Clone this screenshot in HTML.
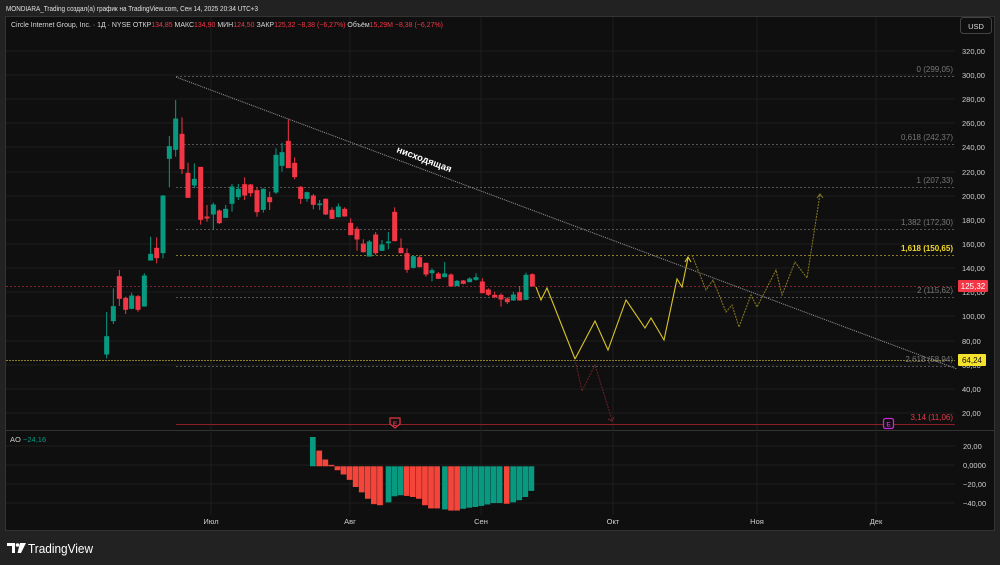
<!DOCTYPE html>
<html><head><meta charset="utf-8"><style>
html,body{margin:0;padding:0;background:#222;width:1000px;height:565px;overflow:hidden}
svg{display:block;font-family:"Liberation Sans","DejaVu Sans",sans-serif}
</style></head><body>
<svg width="1000" height="565" viewBox="0 0 1000 565" xmlns="http://www.w3.org/2000/svg">
<rect width="1000" height="565" fill="#222"/>
<text x="6" y="11" font-size="7.5" fill="#e0e0e0" textLength="252" lengthAdjust="spacingAndGlyphs">MONDIARA_Trading создал(а) график на TradingView.com, Сен 14, 2025 20:34 UTC+3</text>
<rect x="5.5" y="16.5" width="989" height="514" fill="#0f0f0f" stroke="#333"/>
<line x1="5" y1="430.5" x2="995" y2="430.5" stroke="#333"/>
<!-- grid -->
<g stroke="#1c1c1c" stroke-width="1">
<line x1="211" y1="17" x2="211" y2="515"/><line x1="350" y1="17" x2="350" y2="515"/><line x1="481" y1="17" x2="481" y2="515"/><line x1="613" y1="17" x2="613" y2="515"/><line x1="757" y1="17" x2="757" y2="515"/><line x1="876" y1="17" x2="876" y2="515"/>
<line x1="6" y1="51" x2="955" y2="51"/><line x1="6" y1="75" x2="955" y2="75"/><line x1="6" y1="99" x2="955" y2="99"/><line x1="6" y1="123" x2="955" y2="123"/><line x1="6" y1="147" x2="955" y2="147"/><line x1="6" y1="172" x2="955" y2="172"/><line x1="6" y1="196" x2="955" y2="196"/><line x1="6" y1="220" x2="955" y2="220"/><line x1="6" y1="244" x2="955" y2="244"/><line x1="6" y1="268" x2="955" y2="268"/><line x1="6" y1="292" x2="955" y2="292"/><line x1="6" y1="316" x2="955" y2="316"/><line x1="6" y1="341" x2="955" y2="341"/><line x1="6" y1="365" x2="955" y2="365"/><line x1="6" y1="389" x2="955" y2="389"/><line x1="6" y1="413" x2="955" y2="413"/>
<line x1="6" y1="446" x2="955" y2="446"/><line x1="6" y1="465" x2="955" y2="465"/><line x1="6" y1="484" x2="955" y2="484"/><line x1="6" y1="503" x2="955" y2="503"/>
</g>
<!-- fib lines -->
<g stroke="#555" stroke-dasharray="2,2" stroke-width="1">
<line x1="176" y1="76.5" x2="955" y2="76.5"/><line x1="176" y1="144.5" x2="955" y2="144.5"/><line x1="176" y1="187.5" x2="955" y2="187.5"/><line x1="176" y1="229.5" x2="955" y2="229.5"/><line x1="176" y1="297.5" x2="955" y2="297.5"/><line x1="176" y1="366.5" x2="955" y2="366.5"/>
</g>
<line x1="176" y1="255.5" x2="955" y2="255.5" stroke="#8a7d2a" stroke-dasharray="2,2"/>
<line x1="6" y1="286.5" x2="955" y2="286.5" stroke="#7a2530" stroke-dasharray="2,2"/>
<line x1="6" y1="360.5" x2="955" y2="360.5" stroke="#8a7d2a" stroke-dasharray="2,1"/>
<line x1="176" y1="424.5" x2="955" y2="424.5" stroke="#8a1f2a"/>
<g font-size="8" fill="#777" text-anchor="end">
<text x="953" y="72">0 (299,05)</text><text x="953" y="140">0,618 (242,37)</text><text x="953" y="183">1 (207,33)</text><text x="953" y="225">1,382 (172,30)</text><text x="953" y="251" fill="#f2d82a" font-weight="bold">1,618 (150,65)</text><text x="953" y="293">2 (115,62)</text><text x="953" y="362">2,618 (58,94)</text><text x="953" y="420" fill="#e8394a">3,14 (11,06)</text>
</g>
<!-- trend line -->
<line x1="176" y1="77" x2="957" y2="369" stroke="#9a9a9a" stroke-width="1" stroke-dasharray="1,1"/>
<text x="0" y="0" font-size="9.5" font-weight="bold" fill="#fff" transform="translate(396,152) rotate(20.5)">нисходящая</text>
<!-- candles -->
<g transform="translate(80,100) scale(0.33333)">
<g fill="#089981" stroke="#089981" stroke-width="3">
<line x1="80" y1="636" x2="80" y2="775"/><rect x="74" y="710" width="12" height="52"/>
<line x1="100" y1="565" x2="100" y2="672"/><rect x="94" y="620" width="12" height="42"/>
<line x1="155" y1="578" x2="155" y2="628"/><rect x="149" y="588" width="12" height="37"/>
<line x1="193" y1="520" x2="193" y2="620"/><rect x="187" y="528" width="12" height="90"/>
<line x1="212" y1="410" x2="212" y2="482"/><rect x="206" y="463" width="12" height="17"/>
<line x1="249" y1="285" x2="249" y2="475"/><rect x="243" y="288" width="12" height="170"/>
<line x1="268" y1="108" x2="268" y2="262"/><rect x="262" y="140" width="12" height="35"/>
<line x1="287" y1="0" x2="287" y2="170"/><rect x="281" y="57" width="12" height="91"/>
<line x1="343" y1="190" x2="343" y2="265"/><rect x="337" y="238" width="12" height="17"/>
<line x1="400" y1="308" x2="400" y2="390"/><rect x="394" y="315" width="12" height="27"/>
<line x1="437" y1="315" x2="437" y2="352"/><rect x="431" y="328" width="12" height="24"/>
<line x1="456" y1="252" x2="456" y2="335"/><rect x="450" y="261" width="12" height="49"/>
<line x1="475" y1="252" x2="475" y2="300"/><rect x="469" y="268" width="12" height="22"/>
<line x1="550" y1="265" x2="550" y2="338"/><rect x="544" y="268" width="12" height="60"/>
<line x1="588" y1="145" x2="588" y2="282"/><rect x="582" y="166" width="12" height="110"/>
<line x1="606" y1="128" x2="606" y2="215"/><rect x="600" y="158" width="12" height="38"/>
<line x1="681" y1="275" x2="681" y2="305"/><rect x="675" y="278" width="12" height="17"/>
<line x1="719" y1="300" x2="719" y2="330"/><rect x="713" y="312" width="12" height="2"/>
<line x1="775" y1="310" x2="775" y2="352"/><rect x="769" y="321" width="12" height="29"/>
<line x1="868" y1="420" x2="868" y2="470"/><rect x="862" y="426" width="12" height="42"/>
<line x1="906" y1="420" x2="906" y2="453"/><rect x="900" y="435" width="12" height="16"/>
<line x1="925" y1="396" x2="925" y2="448"/><rect x="919" y="426" width="12" height="2"/>
<line x1="1000" y1="465" x2="1000" y2="506"/><rect x="994" y="470" width="12" height="32"/>
<line x1="1056" y1="505" x2="1056" y2="544"/><rect x="1050" y="512" width="12" height="6"/>
<line x1="1094" y1="486" x2="1094" y2="532"/><rect x="1088" y="522" width="12" height="8"/>
<line x1="1131" y1="540" x2="1131" y2="558"/><rect x="1125" y="544" width="12" height="13"/>
<line x1="1169" y1="532" x2="1169" y2="547"/><rect x="1163" y="537" width="12" height="8"/>
<line x1="1188" y1="520" x2="1188" y2="542"/><rect x="1182" y="533" width="12" height="5"/>
<line x1="1300" y1="575" x2="1300" y2="602"/><rect x="1294" y="585" width="12" height="15"/>
<line x1="1338" y1="518" x2="1338" y2="600"/><rect x="1332" y="526" width="12" height="72"/>
</g>
<g fill="#f23645" stroke="#f23645" stroke-width="3">
<line x1="118" y1="510" x2="118" y2="618"/><rect x="112" y="530" width="12" height="65"/>
<line x1="137" y1="590" x2="137" y2="642"/><rect x="131" y="595" width="12" height="33"/>
<line x1="174" y1="585" x2="174" y2="635"/><rect x="168" y="590" width="12" height="38"/>
<line x1="230" y1="412" x2="230" y2="490"/><rect x="224" y="445" width="12" height="28"/>
<line x1="306" y1="52" x2="306" y2="222"/><rect x="300" y="103" width="12" height="103"/>
<line x1="324" y1="188" x2="324" y2="292"/><rect x="318" y="220" width="12" height="72"/>
<line x1="362" y1="202" x2="362" y2="374"/><rect x="356" y="202" width="12" height="156"/>
<line x1="381" y1="315" x2="381" y2="365"/><rect x="375" y="351" width="12" height="3"/>
<line x1="418" y1="328" x2="418" y2="372"/><rect x="412" y="333" width="12" height="35"/>
<line x1="494" y1="232" x2="494" y2="300"/><rect x="488" y="254" width="12" height="31"/>
<line x1="512" y1="252" x2="512" y2="290"/><rect x="506" y="255" width="12" height="23"/>
<line x1="531" y1="262" x2="531" y2="350"/><rect x="525" y="272" width="12" height="63"/>
<line x1="569" y1="275" x2="569" y2="330"/><rect x="563" y="293" width="12" height="12"/>
<line x1="625" y1="58" x2="625" y2="203"/><rect x="619" y="124" width="12" height="79"/>
<line x1="644" y1="172" x2="644" y2="238"/><rect x="638" y="190" width="12" height="40"/>
<line x1="662" y1="258" x2="662" y2="312"/><rect x="656" y="262" width="12" height="33"/>
<line x1="700" y1="282" x2="700" y2="328"/><rect x="694" y="288" width="12" height="25"/>
<line x1="737" y1="295" x2="737" y2="345"/><rect x="731" y="298" width="12" height="44"/>
<line x1="756" y1="322" x2="756" y2="357"/><rect x="750" y="331" width="12" height="24"/>
<line x1="794" y1="322" x2="794" y2="350"/><rect x="788" y="328" width="12" height="20"/>
<line x1="812" y1="355" x2="812" y2="404"/><rect x="806" y="370" width="12" height="34"/>
<line x1="831" y1="380" x2="831" y2="452"/><rect x="825" y="388" width="12" height="29"/>
<line x1="850" y1="418" x2="850" y2="458"/><rect x="844" y="432" width="12" height="23"/>
<line x1="887" y1="396" x2="887" y2="465"/><rect x="881" y="405" width="12" height="53"/>
<line x1="944" y1="322" x2="944" y2="424"/><rect x="938" y="337" width="12" height="85"/>
<line x1="963" y1="415" x2="963" y2="460"/><rect x="957" y="445" width="12" height="13"/>
<line x1="981" y1="445" x2="981" y2="518"/><rect x="975" y="461" width="12" height="47"/>
<line x1="1019" y1="466" x2="1019" y2="502"/><rect x="1013" y="473" width="12" height="27"/>
<line x1="1038" y1="488" x2="1038" y2="530"/><rect x="1032" y="490" width="12" height="32"/>
<line x1="1075" y1="516" x2="1075" y2="537"/><rect x="1069" y="522" width="12" height="13"/>
<line x1="1113" y1="520" x2="1113" y2="560"/><rect x="1107" y="525" width="12" height="33"/>
<line x1="1150" y1="540" x2="1150" y2="553"/><rect x="1144" y="543" width="12" height="7"/>
<line x1="1207" y1="535" x2="1207" y2="580"/><rect x="1201" y="546" width="12" height="32"/>
<line x1="1225" y1="565" x2="1225" y2="588"/><rect x="1219" y="570" width="12" height="13"/>
<line x1="1244" y1="575" x2="1244" y2="595"/><rect x="1238" y="586" width="12" height="4"/>
<line x1="1263" y1="580" x2="1263" y2="620"/><rect x="1257" y="586" width="12" height="11"/>
<line x1="1282" y1="592" x2="1282" y2="612"/><rect x="1276" y="597" width="12" height="8"/>
<line x1="1319" y1="558" x2="1319" y2="602"/><rect x="1313" y="578" width="12" height="22"/>
<line x1="1357" y1="520" x2="1357" y2="560"/><rect x="1351" y="524" width="12" height="34"/>
</g>
</g>
<!-- projections -->
<polyline fill="none" stroke="#d8c428" stroke-width="1.1" points="536,287 541,300 547,288 575,359 595,321 608,350 626,300 645,328 651,318 664,340 677,279 682,287 688,258"/>
<polyline fill="none" stroke="#d8c428" stroke-width="1.1" points="685,262 688,257 691,262"/>
<polyline fill="none" stroke="#8a7b20" stroke-width="1" stroke-dasharray="2,1" points="692,255 706,290 713,280 726,312 732,305 739,327 751,295 757,307 776,270 782,295 795,262 807,278 820,194"/>
<polyline fill="none" stroke="#8a7b20" stroke-width="1" points="817,198 820,194 823,198"/>
<polyline fill="none" stroke="#6a2228" stroke-width="1" stroke-dasharray="2,1" points="575,359 582,391 595,365 612,420"/>
<polyline fill="none" stroke="#6a2228" stroke-width="1" points="608,419 612,421 614,417"/>
<!-- E markers -->
<path d="M390,418 h10 v6 l-5,4 l-5,-4 z" fill="#0f0f0f" stroke="#e23545" stroke-width="1.2"/>
<text x="395" y="426" font-size="6.5" fill="#e23545" text-anchor="middle" font-weight="bold">E</text>
<rect x="883.5" y="418.5" width="10" height="10" rx="2" fill="#0f0f0f" stroke="#c32cd3" stroke-width="1.3"/>
<text x="888.5" y="426.5" font-size="6.5" fill="#c32cd3" text-anchor="middle" font-weight="bold">E</text>
<!-- legend -->
<text x="11" y="27" font-size="7" fill="#d8d8d8" textLength="432" lengthAdjust="spacingAndGlyphs">Circle Internet Group, Inc. · 1Д · NYSE  <tspan>ОТКР</tspan><tspan fill="#f23645">134,85</tspan>  МАКС<tspan fill="#f23645">134,90</tspan>  МИН<tspan fill="#f23645">124,50</tspan>  ЗАКР<tspan fill="#f23645">125,32</tspan>  <tspan fill="#f23645">−8,38 (−6,27%)</tspan>  Объём<tspan fill="#f23645">15,29M</tspan>  <tspan fill="#f23645">−8,38 (−6,27%)</tspan></text>
<!-- price axis -->
<rect x="960.5" y="17.5" width="31" height="16" rx="3" fill="#0f0f0f" stroke="#444"/>
<text x="976" y="29" font-size="7.5" fill="#ddd" text-anchor="middle">USD</text>
<g font-size="7.5" fill="#cfcfcf">
<text x="962" y="54">320,00</text><text x="962" y="78">300,00</text><text x="962" y="102">280,00</text><text x="962" y="126">260,00</text><text x="962" y="150">240,00</text><text x="962" y="175">220,00</text><text x="962" y="199">200,00</text><text x="962" y="223">180,00</text><text x="962" y="247">160,00</text><text x="962" y="271">140,00</text><text x="962" y="295">120,00</text><text x="962" y="319">100,00</text><text x="962" y="344">80,00</text><text x="962" y="368">60,00</text><text x="962" y="392">40,00</text><text x="962" y="416">20,00</text>
<text x="963" y="449">20,00</text><text x="963" y="468">0,0000</text><text x="963" y="487">−20,00</text><text x="963" y="506">−40,00</text>
</g>
<rect x="958" y="280" width="30" height="12" rx="1" fill="#f23645"/>
<text x="973" y="289" font-size="8" fill="#fff" text-anchor="middle">125,32</text>
<rect x="958" y="354" width="28" height="12" rx="1" fill="#f5e22d"/>
<text x="972" y="363" font-size="8" fill="#111" text-anchor="middle">64,24</text>
<!-- AO -->
<text x="10" y="442" font-size="7.5" fill="#ccc">AO</text><text x="23" y="442" font-size="7.5" fill="#089981">−24,16</text>
<g transform="translate(0,422) scale(0.3571)">
<g fill="#089981"><rect x="868" y="42" width="16" height="82"/><rect x="1080" y="124" width="16" height="101"/><rect x="1097" y="124" width="16" height="84"/><rect x="1114" y="124" width="16" height="81"/><rect x="1238" y="124" width="16" height="121"/><rect x="1289" y="124" width="16" height="119"/><rect x="1306" y="124" width="16" height="116"/><rect x="1323" y="124" width="16" height="114"/><rect x="1340" y="124" width="16" height="111"/><rect x="1357" y="124" width="16" height="107"/><rect x="1374" y="124" width="16" height="103"/><rect x="1391" y="124" width="16" height="103"/><rect x="1429" y="124" width="16" height="101"/><rect x="1446" y="124" width="16" height="95"/><rect x="1463" y="124" width="16" height="86"/><rect x="1480" y="124" width="16" height="69"/></g>
<g fill="#f5453a"><rect x="886" y="80" width="16" height="44"/><rect x="903" y="105" width="16" height="19"/><rect x="920" y="120" width="16" height="4"/><rect x="937" y="124" width="16" height="11"/><rect x="954" y="124" width="16" height="23"/><rect x="971" y="124" width="16" height="38"/><rect x="988" y="124" width="16" height="58"/><rect x="1005" y="124" width="16" height="73"/><rect x="1022" y="124" width="16" height="91"/><rect x="1039" y="124" width="16" height="106"/><rect x="1056" y="124" width="16" height="109"/><rect x="1131" y="124" width="16" height="83"/><rect x="1148" y="124" width="16" height="86"/><rect x="1165" y="124" width="16" height="91"/><rect x="1182" y="124" width="16" height="109"/><rect x="1199" y="124" width="16" height="118"/><rect x="1216" y="124" width="16" height="118"/><rect x="1255" y="124" width="16" height="124"/><rect x="1272" y="124" width="16" height="124"/><rect x="1411" y="124" width="16" height="105"/></g>
</g>
<!-- time axis -->
<g font-size="7.5" fill="#cfcfcf" text-anchor="middle">
<text x="211" y="524">Июл</text><text x="350" y="524">Авг</text><text x="481" y="524">Сен</text><text x="613" y="524">Окт</text><text x="757" y="524">Ноя</text><text x="876" y="524">Дек</text>
</g>
<!-- logo -->
<g fill="#fff">
<path d="M7,543 h8 v10 h-3 v-7 h-5 z"/>
<circle cx="17.5" cy="545" r="1.8"/>
<path d="M20,543 h6 l-5,10 h-3.5 z"/>
</g>
<text x="28" y="553" font-size="13" fill="#fff" textLength="65" lengthAdjust="spacingAndGlyphs">TradingView</text>
</svg>
</body></html>
